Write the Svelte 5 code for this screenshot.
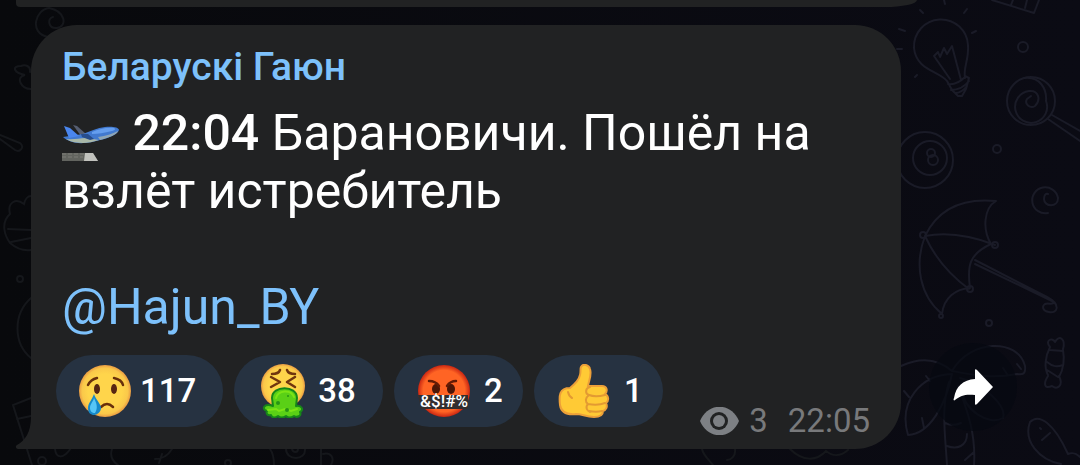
<script>
  const reactions = [
    { id: 'cry', label: 'Crying face', count: 117 },
    { id: 'sick', label: 'Vomiting face', count: 38 },
    { id: 'swear', label: 'Swearing face', count: 2 },
    { id: 'like', label: 'Thumbs up', count: 1 }
  ];
</script>

<main class="chat">
  <svg class="wallpaper" viewBox="0 0 1080 465" preserveAspectRatio="xMaxYMin slice" aria-hidden="true">
    <defs>
      <radialGradient id="skin"><stop offset=".65" stop-color="#ffd54b" /><stop offset=".88" stop-color="#fac84a" /><stop offset="1" stop-color="#e99b43" /></radialGradient>
      <radialGradient id="rage"><stop offset=".8" stop-color="#ff6424" /><stop offset="1" stop-color="#c92612" /></radialGradient>
    </defs>
    <g fill="none" stroke="#1a1b27" stroke-width="2" stroke-linecap="round" stroke-linejoin="round">
      <!-- light bulb -->
      <path d="M965 78c-2-11 4-17 3-33a27 27 0 1 0-54 3c2 22 25 23 33 33M947 81l5 9 6 6 4 0 4-7 3-11-4-2M948 84c7 1 12-2 17-7M951 90c8 0 14-4 18-9M955 93c6 0 9-3 12-7M950 79l-16-23 4-4 2 5 4-9 3 6 5-8 9 34" />
      <path d="M920 10l3 3M944 0l1 4M967 9l-3 4M899 29l6 2M897 49h5M976 31l-4 2M917 75l-2 2" />
      <!-- lollipop -->
      <circle cx="1031" cy="101" r="24" />
      <path d="M1024 78c16-2 23 11 22 23a16 16 0 1 1-17-10c10-1 12 9 6 15-5 3-11-2-8-7l4-3M1052 115l28 16M1048 119l32 22" />
      <circle cx="1023" cy="47" r="5" /><circle cx="997" cy="149" r="4" /><circle cx="989" cy="323" r="3" />
      <!-- billiard ball -->
      <circle cx="925" cy="160" r="28" /><circle cx="930" cy="158" r="17" /><circle cx="931" cy="153" r="4" /><circle cx="933" cy="160" r="5" />
      <!-- curl -->
      <path d="M1048 213a13 13 0 1 1 10-15c0 10-14 9-14 1 0-4 2-6 4-5" />
      <!-- umbrella -->
      <path d="M925 236c14-29 40-38 71-35-12 7-14 28-5 43-22 10-24 22-21 44-14 1-26 9-28 26-22-18-28-49-17-78zM925 236c27-5 52 2 70 9M925 236c11 24 26 40 44 53M975 260l72 37c15 8 10 17 2 15-7-1-7-6-4-8 4-2 7 2 9-2l-79-38" />
      <circle cx="923" cy="235" r="3" /><circle cx="995" cy="245" r="3" /><circle cx="970" cy="289" r="3" /><circle cx="941" cy="316" r="2" />
      <!-- palm -->
      <path d="M952 371c18-32 66-33 73-5 1 8-2 9-8 8-24 5-43 1-65-3-17-15-36-12-51-5M952 374c-31 1-54 27-44 61 22-1 38-31 44-61zM960 378c24 6 47 28 43 40-14 8-39-7-42-30M949 382c-8 26-4 50-2 83M958 386c10 26 18 49 16 79M945 423c7 3 12 2 16 0M947 446c10 4 20 0 20-12M965 460l9-8M926 376l4 5M904 391l5 6M922 418l2 10M1003 368l4 6M1017 364l4 5" />
      <!-- candy -->
      <path d="M1050 347c-6-7 3-10 5-5 4-8 11-3 8 7M1050 347c-5 10-6 21-2 28M1063 350c2 11 0 20-4 27M1048 376c-4 6-5 14 4 10 5 4 12 0 7-10M1050 350l13 1M1047 362c6 5 10 5 16 3M1047 370l11 7" />
      <!-- fish -->
      <path d="M1068 454c-14-31-29-41-38-32-7 19 9 38 31 42M1068 454c5-2 8-1 12 3M1040 428l1 1M1042 440l8-7" />
      <path d="M992 0l42 13 5-13M1011 5l2-5M1025 8l2-8" />
    </g>
    <g fill="none" stroke="#15171b" stroke-width="2" stroke-linecap="round">
      <path d="M48 37c-20-4-12-28 1-29 16 3 19 18 8 20-9 1-10-10-4-11M31 89c-10 0-16-12-6-14-11-2-14-9-4-9 4-2 10 0 9 6M0 135l20 8c5 4 0 10-5 7L0 139M10 214c-3-12 6-16 14-10 1-5 4-8 7-8M10 214c-10 9-5 22 0 29 7 6 14 8 21 7M8 229l23 1M11 242l20-4M31 298c-18 16-18 45 0 60M31 398l-18 7 19 60M17 419l14-3M55 449c1 9 8 11 16-1M112 449c-2 6 0 12 6 16M155 459c8 0 14-5 17-10M162 454l-3 9M270 449c3 4 4 8 4 16M286 449c0 12 20 12 19 0M292 449c1 4 6 4 6 0M321 449v16M323 454c8-2 12 4 8 11M702 449c1 6 7 11 11 16M735 449c1 7-4 11-8 11M790 449c13 13 27 12 36 2 6 5 14 6 22-1" />
      <circle cx="20" cy="279" r="3" /><circle cx="42" cy="461" r="4" /><circle cx="228" cy="463" r="3" />
    </g>
  </svg>

  <div class="previous"></div>

  <div class="row">
    <article class="bubble">
      <svg class="tail" viewBox="0 0 40 50" aria-hidden="true"><path d="M16 0v18C16 33 10 42 2 46c-2 1-1 4 1 4h37V0z" fill="#212223" /></svg>
      <h1>Беларускі Гаюн</h1>
      <p class="text">
        <svg class="plane" viewBox="0 0 58 50" role="img" aria-label="Airplane departure">
          <path d="M11 13l4 1 9 8-5 2z" fill="#555e72" />
          <path d="M1 25l20-3c8-3 14-6 22-7 6-1 14 0 14 3-1 4-10 8-19 10-7 2-11 3-17 3-6 1-16-2-20-6z" fill="#4179cf" />
          <path d="M4 27c8 1 13-1 20-1l13 2c-6 2-11 3-16 3-6 0-12-1-17-4z" fill="#a9b8a8" />
          <path d="M36 25c8-1 14-3 20-6-1 4-10 7-18 9z" fill="#8ea5b4" />
          <path d="M30 20c7-3 15-5 22-4 2 1 1 2-2 3-8 2-14 3-20 3z" fill="#659eee" />
          <path d="M2 14l6 2 9 8-10 2z" fill="#4a86ee" />
          <path d="M19 22h7l6 5-4 1-8-3z" fill="#274d8c" />
          <path d="M0 41h31l5 8H0z" fill="#62645f" /><path d="M23 41h8l5 8H22z" fill="#c1c2bd" /><path d="M0 45h21M0 42h24" stroke="#7c7d78" stroke-dasharray="4 2" />
        </svg>
        <strong>22:04</strong> Барановичи. Пошёл на взлёт истребитель
      </p>
      <p class="text mention"><a href="#Hajun_BY">@Hajun_BY</a></p>

      <footer>
        <div class="reactions">
          {#each reactions as r}
            <button type="button" class:single={r.count < 10} aria-label={`${r.label}, ${r.count}`}>
              <svg class="emoji" viewBox="0 0 54 54" aria-hidden="true">
                {#if r.id === 'cry'}
                  <circle cx="27" cy="27" r="26" fill="url(#skin)" />
                  <ellipse cx="19" cy="25" rx="3" ry="5" fill="#572612" /><ellipse cx="36" cy="25" rx="3" ry="5" fill="#572612" />
                  <path d="M10 21c2-4 5-6 9-7M36 14c5 1 8 3 9 7M23 43c4-4 8-4 12 0" fill="none" stroke="#69300b" stroke-width="2.5" stroke-linecap="round" />
                  <path d="M16 30c-2 6-6 9-6 14s3 7 6 7 7-3 7-7-5-8-7-14z" fill="#1689c9" /><path d="M16 34c-1 4-4 6-4 10 0 3 2 5 5 5 3-5 2-9-1-15z" fill="#56c6f7" />
                {:else if r.id === 'sick'}
                  <circle cx="27" cy="22" r="22" fill="url(#skin)" />
                  <path d="M24 6c-1 3-4 4-8 4M31 6c1 3 4 4 8 4M15 13l9 5-9 5M39 13l-8 5 8 5" fill="none" stroke="#70350f" stroke-width="2.5" stroke-linecap="round" stroke-linejoin="round" />
                  <path d="M17 42l-1-8c0-13 25-13 25 0l-1 8c6-1 8 4 4 6 2 4-3 6-6 4-3 2-6 2-8 0-3 2-6 2-8 0-3 2-6 2-7-1-4 1-5-2-4-4-6-2-3-8 6-5z" fill="#5ad016" stroke="#168619" stroke-width="2" stroke-linejoin="round" />
                  <path d="M20 34c2-8 15-9 18-1M12 46l8-1 3 2 6-2 6 2 6-2" fill="none" stroke="#7be416" stroke-width="2" stroke-linecap="round" />
                  <g fill="#279515"><circle cx="22" cy="39" r="2" /><circle cx="31" cy="46" r="2" /><circle cx="32" cy="32" r="1" /></g>
                {:else if r.id === 'swear'}
                  <circle cx="28" cy="27" r="26" fill="url(#rage)" />
                  <ellipse cx="20" cy="25" rx="4" ry="5" fill="#4d1606" /><ellipse cx="35" cy="25" rx="4" ry="5" fill="#4d1606" />
                  <path d="M13 17c5 0 8 2 10 5M31 22c2-3 5-5 9-5" fill="none" stroke="#651b05" stroke-width="2.5" stroke-linecap="round" />
                  <path d="M2 31h50v14H5z" fill="#322e2e" /><text x="28" y="43" text-anchor="middle" fill="#fff">&amp;$!#%</text>
                {:else}
                  <path d="M14 24c5-4 9-8 10-13 1-3 0-6 1-8 2-4 8-2 9 2 2 6-1 11-2 17h14c5 0 6 5 3 8 4 2 4 7 1 9 2 4 0 7-3 8 0 5-4 6-9 6-8 0-12-3-18-3-10 1-15-2-16-9-1-9-1-17 10-17z" fill="#ffca35" stroke="#eda039" stroke-width="2" />
                  <path d="M34 23c-5 1-5 7-1 8-4 3-4 7-1 9-3 3-1 7 2 8M33 31c5 2 12 1 16 0M32 40c6 1 12 1 17-1M33 47c5 1 9 1 13 0M12 28c1 4 2 5 4 6" fill="none" stroke="#e39a32" stroke-width="2" stroke-linecap="round" />
                {/if}
              </svg>
              <span>{r.count}</span>
            </button>
          {/each}
        </div>
        <div class="meta">
          <svg class="eye" viewBox="0 0 39 28" role="img" aria-label="Views"><path d="M0 14C8-5 31-5 39 14 31 33 8 33 0 14z" fill="#7d8084" /><circle cx="19" cy="14" r="9" fill="#212223" /><circle cx="19" cy="14" r="6" fill="#7d8084" /></svg>
          <span>3</span><time>22:05</time>
        </div>
      </footer>
    </article>

    <button class="share" type="button" aria-label="Share">
      <svg viewBox="0 0 40 36" aria-hidden="true"><path d="M22 1c0-1 1-1 2 0l16 17-16 17c-1 1-2 1-2 0V26C13 25 8 26 2 31c-1 1-2 0-1-2C3 17 10 11 22 10z" fill="#fff" /></svg>
    </button>
  </div>
</main>

<style>
  :global(body) { margin: 0; background: #0a0a11; }
  .chat {
    position: relative;
    min-height: 100vh;
    overflow: hidden;
    display: flex;
    flex-direction: column;
    gap: 18px;
    background: linear-gradient(90deg, #08090c, #0b0b14);
    font-family: Roboto, "Noto Sans", sans-serif;
    color: #fff;
    box-sizing: border-box;
  }
  .wallpaper { position: absolute; inset: 0; width: 100%; height: 100%; }
  .previous { position: relative; height: 7px; margin: 0 163px 0 16px; background: #212223; border-radius: 0 0 32px 4px / 0 0 7px 4px; }
  .row { position: relative; display: flex; align-items: flex-end; gap: 28px; padding: 0 63px 16px 31px; }
  .bubble { position: relative; flex: 1; min-width: 0; box-sizing: border-box; padding: 19px 25px 22px; background: #212223; border-radius: 46px 46px 46px 0; }
  .tail { position: absolute; left: -16px; bottom: 0; width: 40px; height: 50px; }
  h1 { position: relative; margin: 0 6px 14px; font-size: 39px; line-height: 46px; font-weight: 500; color: #7dc1fb; }
  .text { margin: 0 6px; font-size: 50px; line-height: 58px; }
  .text strong { font-weight: 500; }
  .plane { width: 58px; height: 50px; vertical-align: -12px; }
  .mention { margin-top: 58px; }
  a { color: #7dc1fb; text-decoration: none; }
  footer { position: relative; display: flex; justify-content: space-between; align-items: flex-end; margin-top: 19px; }
  .reactions { display: flex; gap: 11px; }
  .reactions button { display: flex; align-items: center; justify-content: space-between; gap: 8px; height: 72px; box-sizing: border-box; padding: 0 27px 0 22px; border: 0; border-radius: 36px; background: #263241; color: #fff; font: 500 33px/40px Roboto, "Noto Sans", sans-serif; cursor: pointer; }
  .reactions .single { min-width: 129px; padding-right: 20px; }
  .emoji { width: 54px; height: 54px; flex: none; }
  .emoji text { font: 500 17px Roboto, sans-serif; }
  .meta { display: flex; align-items: center; gap: 10px; color: #78797b; font-size: 33px; line-height: 40px; margin: 0 6px -14px 0; }
  .meta time { margin-left: 10px; }
  .eye { width: 39px; height: 28px; }
  .share { display: grid; place-items: center; width: 88px; height: 88px; margin-bottom: 18px; padding: 0; border: 0; border-radius: 50%; background: #050811b3; cursor: pointer; }
  .share svg { width: 40px; height: 36px; }
</style>
